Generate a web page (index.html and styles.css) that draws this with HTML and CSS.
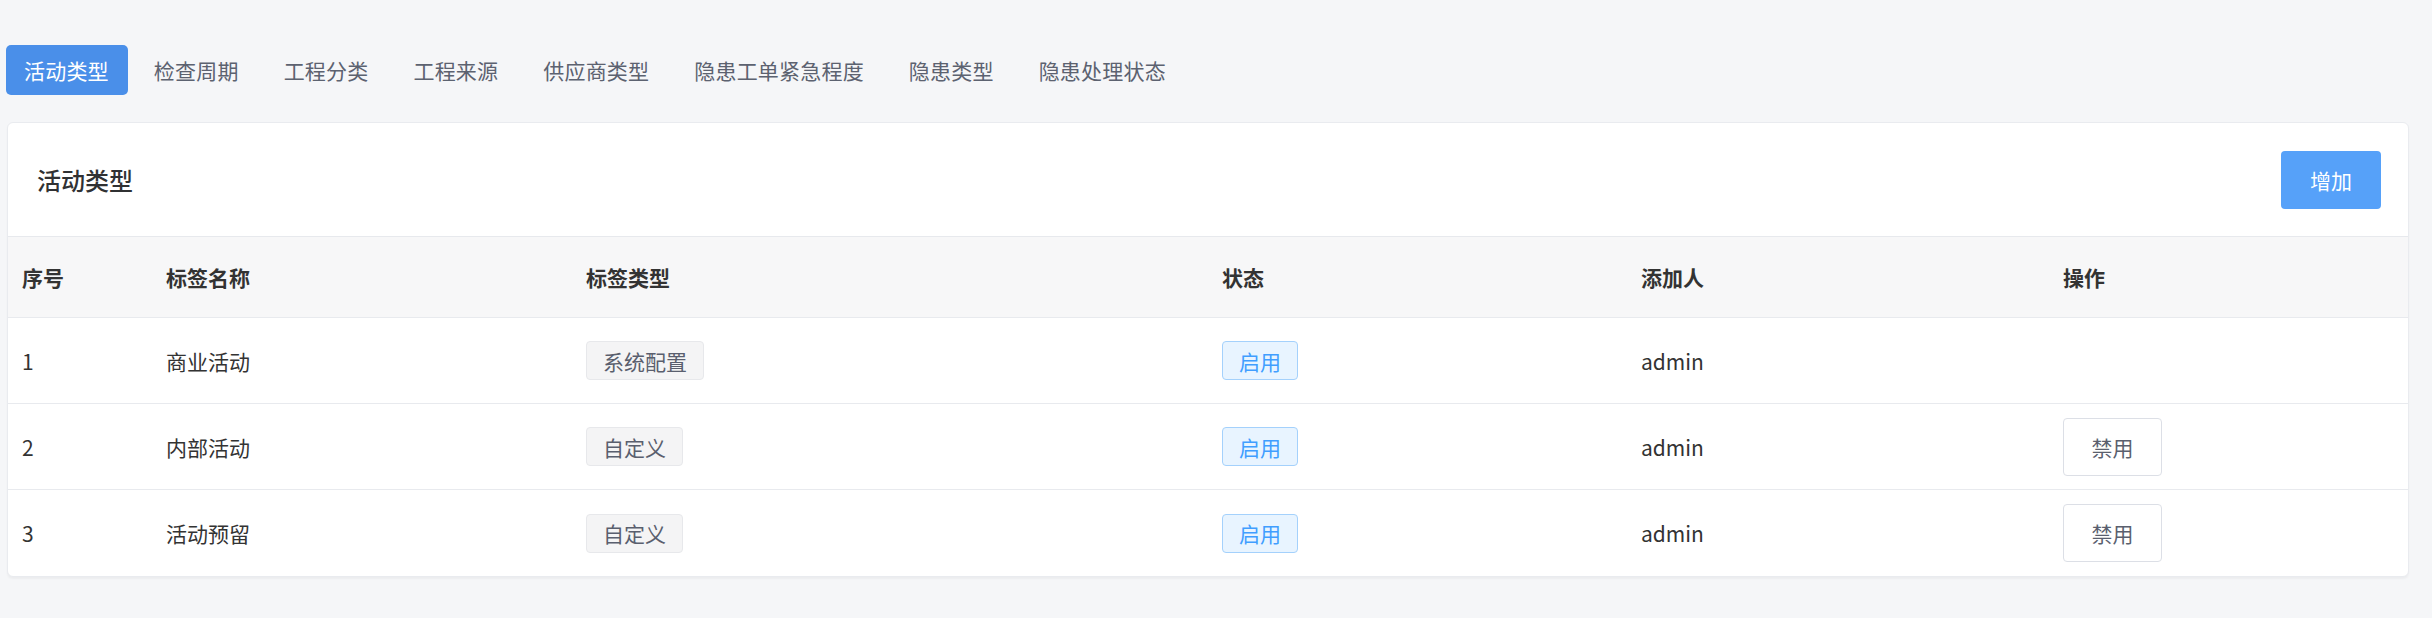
FILE: index.html
```html
<!DOCTYPE html>
<html lang="zh-CN">
<head>
<meta charset="utf-8">
<title>活动类型</title>
<link rel="stylesheet" href="styles.css">
</head>
<body>
<div class="page">
  <nav class="tabs">
    <span class="tab active">活动类型</span>
    <span class="tab">检查周期</span>
    <span class="tab">工程分类</span>
    <span class="tab">工程来源</span>
    <span class="tab">供应商类型</span>
    <span class="tab">隐患工单紧急程度</span>
    <span class="tab">隐患类型</span>
    <span class="tab">隐患处理状态</span>
  </nav>
  <section class="card">
    <header class="card-head">
      <h2 class="card-title">活动类型</h2>
      <button class="btn-primary">增加</button>
    </header>
    <div class="table">
      <div class="row head">
        <div class="cell">序号</div>
        <div class="cell">标签名称</div>
        <div class="cell">标签类型</div>
        <div class="cell">状态</div>
        <div class="cell">添加人</div>
        <div class="cell">操作</div>
      </div>
      <div class="row">
        <div class="cell">1</div>
        <div class="cell">商业活动</div>
        <div class="cell"><span class="tag">系统配置</span></div>
        <div class="cell"><span class="tag tag-blue">启用</span></div>
        <div class="cell">admin</div>
        <div class="cell"></div>
      </div>
      <div class="row">
        <div class="cell">2</div>
        <div class="cell">内部活动</div>
        <div class="cell"><span class="tag">自定义</span></div>
        <div class="cell"><span class="tag tag-blue">启用</span></div>
        <div class="cell">admin</div>
        <div class="cell"><button class="btn-default">禁用</button></div>
      </div>
      <div class="row last">
        <div class="cell">3</div>
        <div class="cell">活动预留</div>
        <div class="cell"><span class="tag">自定义</span></div>
        <div class="cell"><span class="tag tag-blue">启用</span></div>
        <div class="cell">admin</div>
        <div class="cell"><button class="btn-default">禁用</button></div>
      </div>
    </div>
  </section>
</div>
</body>
</html>
```

FILE: styles.css
```css
* { box-sizing: border-box; }
html, body {
  margin: 0;
  padding: 0;
  background: #f5f6f8;
  font-family: "Noto Sans CJK SC", "Noto Sans", sans-serif;
  color: #333;
}
.page {
  padding: 45px 23px 0 7px;
  height: 618px;
}
.tabs {
  display: flex;
  gap: 8px;
  height: 50px;
  margin-left: -1px;
}
.tab {
  display: flex;
  align-items: center;
  padding: 0 19px 0 18px;
  height: 50px;
  font-size: 21px;
  letter-spacing: 0.2px;
  color: #5c6270;
  border-radius: 5px;
}
.tab.active {
  background: #4a8fe9;
  color: #fff;
}
.card {
  margin-top: 27px;
  background: #fff;
  border: 1px solid #e9ebef;
  border-radius: 6px;
  box-shadow: 0 2px 2px rgba(0,0,0,0.04);
  overflow: hidden;
}
.card-head {
  display: flex;
  align-items: center;
  justify-content: space-between;
  height: 114px;
  padding: 0 27px 0 29px;
  border-bottom: 1px solid #e7e9ed;
}
.card-title {
  margin: 0;
  font-size: 24px;
  font-weight: 500;
  color: #303133;
}
.btn-primary {
  width: 100px;
  height: 58px;
  border: none;
  border-radius: 4px;
  background: #56a1f9;
  color: #fff;
  font-family: inherit;
  font-size: 21px;
  padding: 0;
}
.row {
  display: grid;
  grid-template-columns: 144px 420px 636px 419px 422px 1fr;
  align-items: center;
  height: 86px;
  border-bottom: 1px solid #e8eaee;
  font-size: 21px;
  color: #333;
}
.row.last { border-bottom: none; height: 86px; }
.row.head {
  height: 81px;
  background: #f7f7f8;
  font-weight: 700;
  color: #333;
}
.cell {
  padding-left: 14px;
}
.tag {
  display: inline-flex;
  align-items: center;
  height: 39px;
  padding: 0 16px;
  border: 1px solid #e7e8eb;
  border-radius: 4px;
  background: #f4f4f5;
  color: #5a5f6e;
  font-size: 21px;
}
.tag-blue {
  background: #e8f4ff;
  border-color: #a4d1fc;
  color: #409eff;
}
.btn-default {
  width: 99px;
  height: 58px;
  border: 1px solid #dcdfe6;
  border-radius: 4px;
  background: #fff;
  color: #5a5f6e;
  font-family: inherit;
  font-size: 21px;
  padding: 0;
}
```
